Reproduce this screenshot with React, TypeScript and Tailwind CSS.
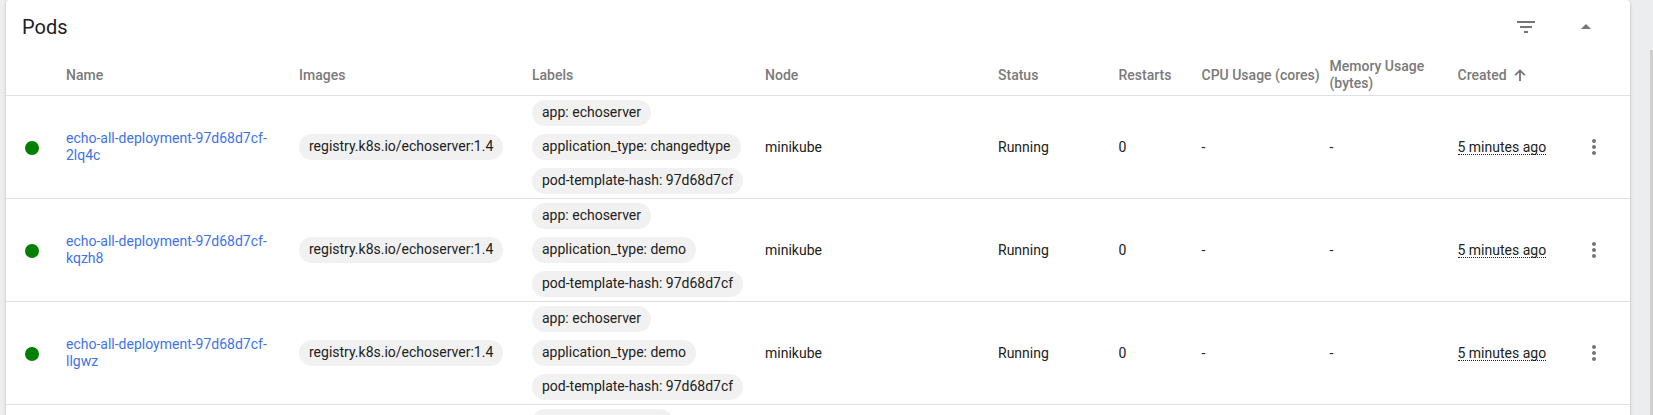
import React from 'react';

type Pod = { name: [string, string]; labels: string[] };

const PODS: Pod[] = [
  { name: ['echo-all-deployment-97d68d7cf-', '2lq4c'], labels: ['app: echoserver', 'application_type: changedtype', 'pod-template-hash: 97d68d7cf'] },
  { name: ['echo-all-deployment-97d68d7cf-', 'kqzh8'], labels: ['app: echoserver', 'application_type: demo', 'pod-template-hash: 97d68d7cf'] },
  { name: ['echo-all-deployment-97d68d7cf-', 'llgwz'], labels: ['app: echoserver', 'application_type: demo', 'pod-template-hash: 97d68d7cf'] },
];

const GRID = 'grid grid-cols-[60px_233px_233px_233px_233px_120.5px_83px_128px_128px_116px_56px] items-center';

function Chip({ children }: { children: React.ReactNode }) {
  return (
    <span className="flex h-[26px] w-fit items-center whitespace-nowrap rounded-full bg-[#f1f1f1] px-[10px] pb-[2px]">
      {children}
    </span>
  );
}

function PodRow({ pod }: { pod: Pod }) {
  return (
    <div className={`${GRID} h-[103px] shrink-0 border-b border-[#e0e0e0]`}>
      <span className="ml-[19px] mt-[2px] size-[14px] rounded-full bg-[#008000]" />
      <a className="text-[#3f73e8]">
        {pod.name[0]}
        <br />
        {pod.name[1]}
      </a>
      <Chip>registry.k8s.io/echoserver:1.4</Chip>
      <div className="flex flex-col gap-2">
        {pod.labels.map((label) => (
          <Chip key={label}>{label}</Chip>
        ))}
      </div>
      <span>minikube</span>
      <span>Running</span>
      <span>0</span>
      <span>-</span>
      <span>-</span>
      <span className="w-fit border-b border-dotted border-[#212121] leading-[14px]">5 minutes ago</span>
      <svg viewBox="0 0 24 24" className="ml-[8.5px] size-6 fill-[#757575]">
        <path d="M12 8c1.1 0 2-.9 2-2s-.9-2-2-2-2 .9-2 2 .9 2 2 2zm0 2c-1.1 0-2 .9-2 2s.9 2 2 2 2-.9 2-2-.9-2-2-2zm0 6c-1.1 0-2 .9-2 2s.9 2 2 2 2-.9 2-2-.9-2-2-2z" />
      </svg>
    </div>
  );
}

export default function App() {
  return (
    <div className="flex h-[415px] overflow-hidden bg-[#ecedef] pl-[6px] font-[Roboto,sans-serif] text-[14px] leading-[17px] text-[#212121]">
      <main className="flex h-[440px] w-[1624px] shrink-0 flex-col rounded-t bg-white shadow-[0_1px_3px_rgba(0,0,0,0.25)]">
        <header className="flex h-[54px] shrink-0 items-center pl-4">
          <h2 className="grow text-[20px] leading-6">Pods</h2>
          <svg viewBox="0 0 24 24" className="mr-9 size-6 fill-[#757575]">
            <path d="M10 18h4v-2h-4v2zM3 6v2h18V6H3zm3 7h12v-2H6v2z" />
          </svg>
          <svg viewBox="0 0 24 24" className="mr-8 size-6 fill-[#757575]">
            <path d="M7 14l5-5 5 5z" />
          </svg>
        </header>
        <div className={`${GRID} h-[42px] shrink-0 border-b border-[#e0e0e0] pt-px font-medium text-[#7a7a7a]`}>
          <span />
          <span>Name</span>
          <span>Images</span>
          <span>Labels</span>
          <span>Node</span>
          <span>Status</span>
          <span>Restarts</span>
          <span className="whitespace-nowrap">CPU Usage (cores)</span>
          <span className="-mt-px">
            Memory Usage
            <br />
            (bytes)
          </span>
          <span className="flex items-center">
            Created
            <svg viewBox="0 0 12 12" className="mb-px ml-[7px] size-3 fill-none stroke-[#757575] stroke-[1.8]">
              <path d="M6 12V1.5M1.2 6.2L6 1.4L10.8 6.2" />
            </svg>
          </span>
          <span />
        </div>
        {PODS.map((pod) => (
          <PodRow key={pod.name[1]} pod={pod} />
        ))}
        <div className={`${GRID} pt-1`}>
          <span className="col-span-3" />
          <span className="h-[26px] w-[141px] rounded-full bg-[#f1f1f1]" />
        </div>
      </main>
      <div className="ml-5 mt-[50px] w-[3px] shrink-0 bg-[#cfcfcf]" />
    </div>
  );
}
